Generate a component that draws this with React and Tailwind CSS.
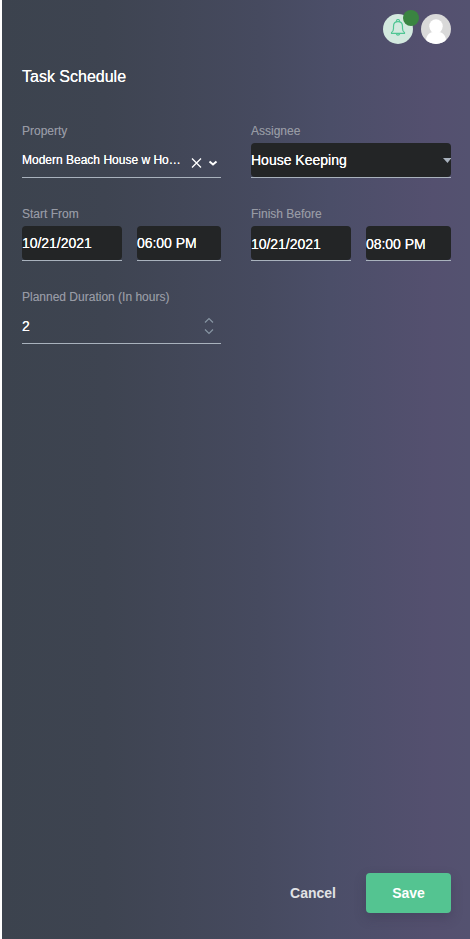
import React from "react";

function Field({ label, children }) {
  return (
    <div className="h-[83px] min-w-0">
      <div className="h-[21px] text-xs leading-[18px] text-[#979aa4] [text-shadow:0_0_0.5px_#979aa480]">{label}</div>
      {children}
    </div>
  );
}

function DarkInput({ value, className }) {
  return (
    <div className={`h-[35px] border-b border-[#a9b2bd] ${className}`}>
      <div className="flex h-[34px] items-center rounded bg-[#232526] text-sm tracking-[-0.04px] text-white [text-shadow:0_0_0.5px_#fff]">
        {value}
      </div>
    </div>
  );
}

function Bell() {
  return (
    <svg width="18" height="18" viewBox="0 0 18 18" fill="none" stroke="#50c694" strokeWidth="1.2" strokeLinecap="round" strokeLinejoin="round">
      <path d="M7.500 2.600V2a1.500 1.500 0 0 1 3 0v.600" />
      <path d="M2.500 14.400v-.900c1.500-.800 2-2.200 2-4V7.400C4.500 4.500 6.300 2.700 9 2.700s4.500 1.800 4.500 4.700v2.100c0 1.800.500 3.200 2 4v.900Z" />
      <path d="M7.300 14.700a1.750 1.900 0 0 0 3.400 0" />
    </svg>
  );
}

export default function App() {
  return (
    <div className="h-[939px] w-[470px] bg-white pl-0.5 font-['Liberation_Sans',Arial,sans-serif]">
      <main className="flex h-full flex-col bg-[linear-gradient(to_right,#3c434e_0%,#3e4451_22%,#464a5f_55%,#4b4e68_70%,#54506f_92%,#545270_100%)] pr-[19px] pl-5">
        <header className="flex h-[59px] justify-end gap-2 pt-3.5">
          <div className="relative flex size-[30px] items-center justify-center rounded-full bg-[#d3e9df]">
            <div className="-mt-[3px]"><Bell /></div>
            <span className="absolute -top-1 -right-1.5 size-4 rounded-full bg-[#3a8441]" />
          </div>
          <div className="size-[30px] overflow-hidden rounded-full bg-[#d9d9d9]">
            <svg width="30" height="30" viewBox="0 0 30 30" fill="white">
              <ellipse cx="15" cy="12.200" rx="6.700" ry="7" />
              <path d="M5 30v-3.500c0-5 3.500-8 7-8.500h6c3.500.5 7 3.500 7 8.500V30Z" />
            </svg>
          </div>
        </header>
        <h1 className="h-[63px] pt-1.5 text-base leading-6 text-white [text-shadow:0_0_0.5px_#fff]">Task Schedule</h1>
        <section className="grid grid-cols-[199px_200px] gap-x-[30px]">
          <Field label="Property">
            <div className="flex h-[35px] items-center border-b border-[#a9b2bd]">
              <div className="w-[162px] whitespace-nowrap text-xs text-white [text-shadow:0_0_0.5px_#fff]">Modern Beach House w Ho…</div>
              <svg className="mt-1.5 ml-1.5" width="30" height="14" viewBox="0 0 30 14" fill="none" stroke="white">
                <path strokeWidth="1.300" d="m2 2.500 9 9m0-9-9 9" />
                <path strokeWidth="2" d="m19.500 5.500 3.500 3 3.500-3" />
              </svg>
            </div>
          </Field>
          <Field label="Assignee">
            <div className="h-[35px] border-b border-[#a9b2bd]">
              <div className="flex h-[34px] items-center justify-between rounded bg-[#232526] text-sm text-white [text-shadow:0_0_0.5px_#fff]">
                House Keeping
                <svg width="8" height="5" viewBox="0 0 8 5" fill="#a9b2bd"><path d="M0 0h8v.5L4.500 5Z" /></svg>
              </div>
            </div>
          </Field>
          <Field label="Start From">
            <div className="flex gap-[15px]">
              <DarkInput value="10/21/2021" className="w-[100px]" />
              <DarkInput value="06:00 PM" className="w-[84px]" />
            </div>
          </Field>
          <Field label="Finish Before">
            <div className="flex gap-[15px]">
              <DarkInput value="10/21/2021" className="w-[100px] *:pt-0.5" />
              <DarkInput value="08:00 PM" className="w-[85px] *:pt-0.5" />
            </div>
          </Field>
          <Field label="Planned Duration (In hours)">
            <div className="flex h-[35px] items-center justify-between border-b border-[#a9b2bd] pr-[7px] text-sm text-white [text-shadow:0_0_0.5px_#fff]">
              2
              <svg width="10" height="18" viewBox="0 0 10 18" fill="none" stroke="#8795a3" strokeWidth="1.200">
                <path d="m1 5.500 4-4 4 4M1 12.500l4 4 4-4" />
              </svg>
            </div>
          </Field>
        </section>
        <footer className="mt-auto mb-[26px] flex items-center justify-end gap-[30px] text-sm font-bold">
          <button className="text-[#e1e2e5]">Cancel</button>
          <button className="h-10 w-[85px] rounded bg-[#54c491] text-white shadow-[0_5px_12px_rgba(50,45,70,0.3)]">Save</button>
        </footer>
      </main>
    </div>
  );
}
